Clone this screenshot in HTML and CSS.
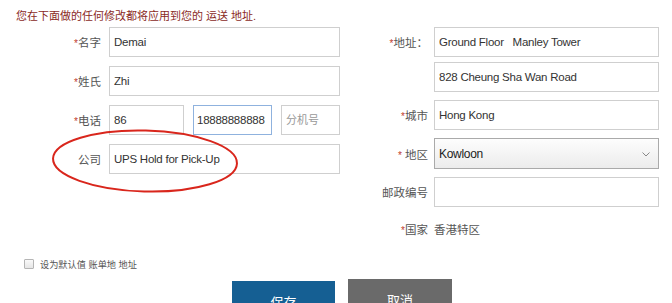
FILE: index.html
```html
<!DOCTYPE html>
<html>
<head>
<meta charset="utf-8">
<link rel="stylesheet" href="styles.css">
</head>
<body>
<div class="page">
  <p class="notice">您在下面做的任何修改都将应用到您的 运送 地址.</p>
  <div class="cols">
    <div class="col left">
      <div class="row">
        <label class="lbl"><span class="req">*</span>名字</label>
        <input class="inp" type="text" value="Demai">
      </div>
      <div class="row">
        <label class="lbl"><span class="req">*</span>姓氏</label>
        <input class="inp" type="text" value="Zhi">
      </div>
      <div class="row">
        <label class="lbl"><span class="req">*</span>电话</label>
        <div class="phone">
          <input class="inp code" type="text" value="86">
          <input class="inp num focus" type="text" value="18888888888">
          <input class="inp ext" type="text" placeholder="分机号">
        </div>
      </div>
      <div class="row">
        <label class="lbl">公司</label>
        <input class="inp" type="text" value="UPS Hold for Pick-Up">
      </div>
    </div>
    <div class="col right">
      <div class="row tight">
        <label class="lbl"><span class="req">*</span>地址：</label>
        <input class="inp" type="text" value="Ground Floor &nbsp; Manley Tower">
      </div>
      <div class="row">
        <span class="lbl"></span>
        <input class="inp" type="text" value="828 Cheung Sha Wan Road">
      </div>
      <div class="row">
        <label class="lbl"><span class="req">*</span>城市</label>
        <input class="inp" type="text" value="Hong Kong">
      </div>
      <div class="row sel-row">
        <label class="lbl"><span class="req">*</span> 地区</label>
        <div class="select">
          <span>Kowloon</span>
          <svg class="chev" width="8" height="5" viewBox="0 0 8 5"><path d="M0.5 0.5 L4 4 L7.5 0.5" fill="none" stroke="#888" stroke-width="1"/></svg>
        </div>
      </div>
      <div class="row">
        <label class="lbl">邮政编号</label>
        <input class="inp" type="text" value="">
      </div>
      <div class="row country">
        <label class="lbl"><span class="req">*</span>国家</label>
        <span class="country-val">香港特区</span>
      </div>
    </div>
  </div>
  <div class="default">
    <span class="cb"></span>
    <span class="cb-text">设为默认值 账单地 地址</span>
  </div>
  <div class="buttons">
    <button class="btn save">保存</button>
    <button class="btn cancel">取消</button>
  </div>
  <svg class="ellipse" width="200" height="70" viewBox="0 0 200 70">
    <ellipse cx="100" cy="35" rx="92" ry="30.5" fill="none" stroke="#d9261c" stroke-width="2" transform="rotate(1.5 100 35)"/>
  </svg>
</div>
</body>
</html>
```

FILE: styles.css
```css
* { box-sizing: border-box; }
html, body { margin: 0; padding: 0; background: #fff; overflow: hidden; }
body {
  font-family: "Liberation Sans", Arial, "Noto Sans CJK SC", sans-serif;
  font-size: 12px;
  color: #555;
}
.page { position: relative; width: 672px; height: 303px; overflow: hidden; }
.notice {
  margin: 0;
  padding: 9px 0 0 16px;
  height: 27px;
  line-height: 15px;
  font-size: 11px;
  color: #8a2a1e;
}
.cols { display: flex; }
.col { display: flex; flex-direction: column; gap: 9px; }
.left { width: 340px; }
.right { width: 332px; gap: 8px; }
.row { display: flex; align-items: center; height: 30px; }
.row.tight { margin-bottom: -3px; }
.left .lbl { width: 101px; margin-right: 8px; }
.right .lbl { width: 88px; margin-right: 6px; }
.lbl { text-align: right; font-size: 11.5px; color: #555; white-space: nowrap; }
.req { color: #c0392b; font-size: 10px; }
.inp {
  height: 30px;
  border: 1px solid #cfcfcf;
  padding: 0 4px;
  font-family: "Liberation Sans", Arial, "Noto Sans CJK SC", sans-serif;
  font-size: 11.5px;
  letter-spacing: -0.25px;
  color: #333;
  background: #fff;
  outline: none;
}
.left .inp { width: 231px; }
.right .inp { width: 225px; }
.phone { display: flex; gap: 9px; }
.left .phone .code { width: 75px; }
.left .phone .num { width: 79px; padding: 0 3px; }
.left .phone .ext { width: 59px; }
.focus { border-color: #8fb2de; }
.ext::placeholder { color: #999; font-family: "Noto Sans CJK SC", sans-serif; font-size: 11px; letter-spacing: 0; }
.sel-row { height: 31px; }
.select {
  width: 225px;
  height: 31px;
  border: 1px solid #aaa;
  background: linear-gradient(#fdfdfd, #ececec);
  display: flex;
  align-items: center;
  justify-content: space-between;
  padding: 0 8px 0 4px;
  font-size: 12px;
  letter-spacing: -0.3px;
  color: #222;
}
.chev { margin-top: 1px; }
.row.country { height: 16px; margin-top: 6px; }
.country-val { font-size: 11.5px; color: #555; }
.default {
  display: flex;
  align-items: center;
  margin: 21px 0 0 24px;
  height: 12px;
}
.cb {
  width: 10px; height: 10px;
  border: 1px solid #b5b5b5;
  background: linear-gradient(#fafafa, #e6e6e6);
  border-radius: 1px;
}
.cb-text { margin-left: 6px; font-size: 9.2px; color: #555; }
.buttons { display: flex; gap: 13px; margin: 10px 0 0 232px; align-items: flex-start; }
.btn {
  border: none;
  color: #fff;
  font-family: "Noto Sans CJK SC", sans-serif;
  font-size: 13px;
  height: 40px;
  padding: 0;
}
.save { width: 103px; background: #155f93; margin-top: 1px; }
.cancel { width: 104px; background: #6a6a6a; margin-top: -1px; }
.ellipse { position: absolute; left: 45px; top: 126px; }
```
